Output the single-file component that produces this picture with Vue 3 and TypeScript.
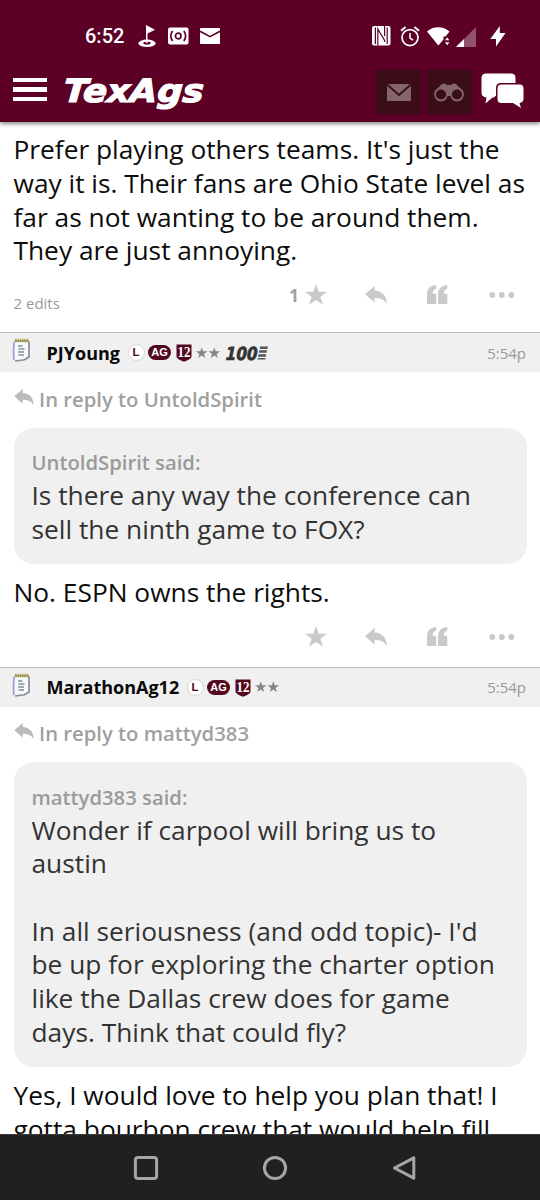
<script setup lang="ts">
interface Post {
  id: number
  author: string
  replyTo: string
  century: boolean
  time: string
  quote: string[]
  body: string[]
  actions: boolean
}

const intro: string[] = [
  "Prefer playing others teams. It's just the",
  'way it is. Their fans are Ohio State level as',
  'far as not wanting to be around them.',
  'They are just annoying.',
]

const posts: Post[] = [
  {
    id: 1,
    author: 'PJYoung',
    replyTo: 'UntoldSpirit',
    century: true,
    time: '5:54p',
    quote: ['Is there any way the conference can', 'sell the ninth game to FOX?'],
    body: ['No. ESPN owns the rights.'],
    actions: true,
  },
  {
    id: 2,
    author: 'MarathonAg12',
    replyTo: 'mattyd383',
    century: false,
    time: '5:54p',
    quote: [
      'Wonder if carpool will bring us to',
      'austin',
      '',
      "In all seriousness (and odd topic)- I'd",
      'be up for exploring the charter option',
      'like the Dallas crew does for game',
      'days. Think that could fly?',
    ],
    body: ['Yes, I would love to help you plan that! I', 'gotta bourbon crew that would help fill'],
    actions: false,
  },
]

const star = 'M11 0 L13.7 7.7 L22 7.8 L15.4 12.8 L17.8 20.6 L11 15.9 L4.2 20.6 L6.6 12.8 L0 7.8 L8.3 7.7 Z'
const reply = 'M0 8.2 L9.6 0 V4.6 C17 5 21.5 9.5 22 18 C19 13.5 15.5 12 9.6 12 V16.6 Z'
const quoteMark =
  'M9.2 0 V3.8 C6.8 4.3 5.7 6 5.7 8.7 H9.2 V19 H0 V9.5 C0 4 3.2 0.4 9.2 0 Z M20.3 0 V3.8 C17.9 4.3 16.8 6 16.8 8.7 H20.3 V19 H11.1 V9.5 C11.1 4 14.3 0.4 20.3 0 Z'
</script>

<template>
  <div class="screen">
    <header class="top">
      <div class="status">
        <span class="clock">6:52</span>
        <svg class="golf" width="18" height="23" viewBox="0 0 18 23">
          <ellipse cx="9" cy="18.3" rx="8.6" ry="3.7" fill="#fff" />
          <ellipse cx="9" cy="18" rx="3.7" ry="1.5" fill="#5c0025" />
          <path d="M8 0 L17 4.8 L9.5 8.5 V18 H8 Z" fill="#fff" />
        </svg>
        <svg class="cast" width="21" height="18" viewBox="0 0 21 18">
          <rect x="0" y="0.5" width="20.5" height="17" rx="2" fill="#fff" />
          <g fill="none" stroke="#5c0025" stroke-width="1.7">
            <circle cx="10.2" cy="9" r="2.8" />
            <path d="M4.6 4 C2.4 7 2.4 11 4.6 14 M15.8 4 C18 7 18 11 15.8 14" />
          </g>
        </svg>
        <svg class="mail" width="20" height="16" viewBox="0 0 20 16">
          <rect width="20" height="16" rx="0.8" fill="#fff" />
          <path d="M0 3.3 L10 8.6 L20 3.3" fill="none" stroke="#5c0025" stroke-width="1.6" />
        </svg>
        <span class="grow"></span>
        <svg class="nfc" width="19" height="20" viewBox="0 0 19 20">
          <rect width="18.5" height="19.5" rx="2" fill="#fff" />
          <path d="M3.4 1.5 V18 M5.8 19.5 V3 L12.6 14.5 V16 M15.2 18 V1.5 M12.6 0 V10" fill="none" stroke="#5c0025" stroke-width="1.2" />
        </svg>
        <svg class="alarm" width="20" height="21" viewBox="0 0 20 21">
          <g fill="none" stroke="#fff" stroke-width="1.7">
            <circle cx="10" cy="11.6" r="8" />
            <path d="M1 4.8 L5.6 1 M14.4 1 L19 4.8" stroke-width="2" />
            <path d="M10 7 V12 L13 14.2" stroke-width="1.5" />
          </g>
        </svg>
        <svg class="wifi" width="24" height="19" viewBox="0 0 24 19">
          <path d="M0 4.5 C6 -1.3 16.5 -1.3 22.5 4.5 L18.5 9.5 H16.5 V12.5 L11.3 18.5 Z" fill="#fff" />
          <path d="M18 13.3 L20.2 10.5 L22.4 13.3 Z M18 15.3 H22.4 L20.2 18.2 Z" fill="#fff" />
        </svg>
        <svg class="signal" width="21" height="20" viewBox="0 0 21 20">
          <path d="M20 0 V20 H0 Z" fill="#915270" />
          <path d="M8 12 V20 H0 Z" fill="#fff" />
        </svg>
        <svg class="bolt" width="16" height="21" viewBox="0 0 16 21">
          <path d="M9.8 0 V7 H15.5 L6 20.5 V13 H0.3 Z" fill="#fff" />
        </svg>
      </div>
      <div class="bar">
        <div class="burger"><i></i><i></i><i></i></div>
        <svg class="logo" width="150" height="40" viewBox="0 0 150 40">
          <g transform="translate(2 30.3) skewX(-4)">
            <text class="brand" textLength="140" lengthAdjust="spacingAndGlyphs">TexAgs</text>
          </g>
        </svg>
        <span class="grow"></span>
        <div class="tile">
          <svg width="24" height="17" viewBox="0 0 24 17">
            <rect width="24" height="17" fill="#84656d" />
            <path d="M0 0.5 L12 11 L24 0.5" fill="none" stroke="#3a0d17" stroke-width="2" />
          </svg>
        </div>
        <div class="tile second">
          <svg width="30" height="19" viewBox="0 0 30 19">
            <path d="M1 8 L8 1 Q11 -0.5 13 2 H17 Q19 -0.5 22 1 L29 8 L20 13 H10 Z" fill="#84656d" />
            <circle cx="7" cy="11.5" r="6" fill="#3a0d17" stroke="#84656d" stroke-width="1.8" />
            <circle cx="23" cy="11.5" r="6" fill="#3a0d17" stroke="#84656d" stroke-width="1.8" />
          </svg>
        </div>
        <svg class="chat" width="43" height="36" viewBox="0 0 43 36">
          <path d="M5 0.5 H30 Q34.5 0.5 34.5 5 V10 H20 Q15 10 15 15 V22.5 L13 24.5 H11.5 L4.5 30.5 L5.5 24.5 Q0.5 24 0.5 19.5 V5 Q0.5 0.5 5 0.5 Z" fill="#fff" />
          <path d="M20.5 11.5 H38.5 Q42.5 11.5 42.5 15.5 V25.5 Q42.5 29.5 38.5 30 L40 35 L32 30 H20.5 Q16.5 30 16.5 26 V15.5 Q16.5 11.5 20.5 11.5 Z" fill="#fff" />
        </svg>
      </div>
    </header>

    <main class="thread">
      <section class="first">
        <p class="copy"><span v-for="line in intro" :key="line" class="line">{{ line }}</span></p>
        <div class="actions">
          <span class="edits">2 edits</span>
          <span class="count">1</span>
          <svg class="a-star" width="22" height="21" viewBox="0 0 22 21"><path :d="star" /></svg>
          <svg class="a-reply" width="22" height="18" viewBox="0 0 22 18"><path :d="reply" /></svg>
          <svg class="a-quote" width="21" height="20" viewBox="0 0 21 20"><path :d="quoteMark" /></svg>
          <svg class="a-more" width="26" height="8" viewBox="0 0 26 8">
            <circle cx="3.3" cy="4" r="2.9" /><circle cx="12.8" cy="4" r="2.9" /><circle cx="22.3" cy="4" r="2.9" />
          </svg>
        </div>
      </section>

      <article v-for="post in posts" :key="post.id" class="post">
        <div class="head">
          <svg class="note" width="20" height="26" viewBox="0 0 20 26">
            <path d="M3.5 3.5 H16.5 V20 L12.5 22.5 L3 23.5 Q1.5 15 2.5 4 Z" fill="#f6fafb" />
            <path d="M2 5 Q1.2 14 1.8 23" fill="none" stroke="#9a9fd8" stroke-width="1.8" />
            <path d="M17 4.5 V20 L12.5 22.8 L3 24" fill="none" stroke="#8a8d8f" stroke-width="1.7" />
            <path d="M3 3.5 H17" stroke="#b9a45a" stroke-width="3.4" stroke-dasharray="1.6 0.7" />
            <path d="M2.5 4 H17" stroke="#8b7b46" stroke-width="1" />
            <path d="M6 9 H10.5 M6.5 12 H12.5 M6 15 H12 M6.5 18 H12" stroke="#7d939b" stroke-width="1.4" />
          </svg>
          <span class="author" :class="{ long: !post.century }">{{ post.author }}</span>
          <span class="ell">L</span>
          <span class="ag">AG</span>
          <svg class="shield" width="16" height="18" viewBox="0 0 16 18">
            <path d="M0.5 0.5 H15.5 V13 Q15 15.2 8 17.8 Q1 15.2 0.5 13 Z" fill="#54081f" />
            <text x="8" y="13" class="twelve" text-anchor="middle" textLength="13" lengthAdjust="spacingAndGlyphs">12</text>
          </svg>
          <svg class="stars" width="24" height="12" viewBox="0 0 46 22">
            <path :d="star" /><path :d="star" transform="translate(24)" />
          </svg>
          <svg v-if="post.century" class="century" width="45" height="20" viewBox="0 0 45 20">
            <g transform="translate(0.5 16.8) skewX(-2)">
              <text class="hundred" textLength="32" lengthAdjust="spacingAndGlyphs">100</text>
            </g>
            <path d="M35.2 3.5 H43 L42.4 6 H34.6 Z M34.4 7.3 H42.1 L41.5 9.8 H33.8 Z M33.6 11.2 H41.3 L40.7 13.7 H33 Z M32.9 14.9 H40.5 L40.2 16.6 H32.5 Z" fill="#555" />
          </svg>
          <span class="grow"></span>
          <span class="time">{{ post.time }}</span>
        </div>
        <div class="reply">
          <svg width="20" height="16" viewBox="0 0 22 18"><path :d="reply" /></svg>
          <span>In reply to {{ post.replyTo }}</span>
        </div>
        <blockquote class="quote">
          <div class="said">{{ post.replyTo }} said:</div>
          <span v-for="(line, i) in post.quote" :key="i" class="line">{{ line }}</span>
        </blockquote>
        <p class="copy"><span v-for="line in post.body" :key="line" class="line">{{ line }}</span></p>
        <div v-if="post.actions" class="actions tall">
          <svg class="a-star" width="22" height="21" viewBox="0 0 22 21"><path :d="star" /></svg>
          <svg class="a-reply" width="22" height="18" viewBox="0 0 22 18"><path :d="reply" /></svg>
          <svg class="a-quote" width="21" height="20" viewBox="0 0 21 20"><path :d="quoteMark" /></svg>
          <svg class="a-more" width="26" height="8" viewBox="0 0 26 8">
            <circle cx="3.3" cy="4" r="2.9" /><circle cx="12.8" cy="4" r="2.9" /><circle cx="22.3" cy="4" r="2.9" />
          </svg>
        </div>
      </article>
    </main>

    <nav class="nav">
      <svg width="26" height="26" viewBox="0 0 26 26"><rect x="2.4" y="2.4" width="21.2" height="21.2" rx="2.5" /></svg>
      <svg width="26" height="26" viewBox="0 0 26 26"><circle cx="13" cy="13" r="10.6" /></svg>
      <svg width="26" height="26" viewBox="0 0 26 26"><path d="M22.8 2.8 V23.2 L3.5 13 Z" stroke-linejoin="round" /></svg>
    </nav>
  </div>
</template>

<style>
body {
  margin: 0;
  background: #fff;
}
</style>

<style scoped>
.screen {
  display: flex;
  flex-direction: column;
  width: 540px;
  height: 1200px;
  overflow: hidden;
  background: #fff;
  color: #0c0c0c;
  font-family: "Open Sans", "Noto Sans", sans-serif;
}
svg {
  display: block;
  flex: none;
}
.grow {
  flex: 1;
}
.top {
  flex: none;
  height: 122px;
  background: #5c0025;
  box-shadow: 0 2px 4px rgba(0, 0, 0, 0.45);
  z-index: 1;
}
.status {
  display: flex;
  align-items: center;
  height: 72px;
  box-sizing: border-box;
  padding: 0 34.5px 0 85px;
}
.clock {
  width: 53px;
  font: 500 20px/24px Roboto, sans-serif;
  color: #fff;
}
.golf { margin-top: 1px; }
.cast { margin-left: 12px; }
.mail { margin-left: 11px; }
.alarm { margin-left: 9px; }
.wifi { margin-left: 7px; }
.signal { margin-left: 5px; margin-top: 1px; }
.bolt { margin-left: 13px; }
.bar {
  display: flex;
  align-items: center;
  height: 40px;
  padding: 0 16px 0 13px;
}
.burger {
  display: grid;
  gap: 5px;
  width: 34px;
  margin-top: -5px;
}
.burger i {
  height: 4.6px;
  background: #fff;
}
.logo {
  margin: 0 0 0 14px;
  overflow: visible;
}
.brand {
  font: italic 700 32px "DejaVu Sans", sans-serif;
  fill: #fff;
  stroke: #fff;
  stroke-width: 1.2px;
}
.tile {
  display: grid;
  place-items: center;
  width: 44px;
  height: 44px;
  border-radius: 3px;
  background: #3a0d17;
  box-shadow: 0 0 2px #3a0d17;
}
.second { margin-left: 6px; }
.chat { margin-left: 10.5px; margin-top: -2px; }
.tile:not(.second) { margin-right: -0.5px; }
.thread {
  flex: 1;
  min-height: 0;
  overflow: hidden;
}
.first {
  height: 210px;
  box-sizing: border-box;
  padding-top: 11.4px;
}
.copy {
  margin: 0 13.5px;
  font-size: 26.3px;
  line-height: 33.7px;
}
.line {
  display: block;
  height: 33.7px;
  white-space: nowrap;
}
.actions {
  display: flex;
  align-items: center;
  justify-content: flex-end;
  height: 53px;
  padding: 0 25px 0 13.5px;
  fill: #c9c9c9;
}
.actions.tall {
  height: 54.6px;
  padding-bottom: 2.6px;
}
.edits {
  margin: 17px auto 0 0;
  font-size: 15px;
  line-height: 20px;
  color: #999;
}
.count {
  margin-right: 6px;
  font-size: 17.5px;
  font-weight: 700;
  line-height: 20px;
  color: #a0a0a0;
}
.a-reply { margin-left: 38px; }
.a-quote { margin-left: 40px; }
.a-more { margin-left: 41px; }
.head {
  display: flex;
  align-items: center;
  height: 40px;
  box-sizing: border-box;
  padding: 0 14px 0 12px;
  border-top: 1.5px solid #b9b9b9;
  background: #f0f0f0;
}
.note { margin-top: -5px; }
.author {
  width: 73px;
  margin: 0 8px 0 14.5px;
  font-size: 18px;
  font-weight: 700;
  line-height: 24px;
  color: #0a0a0a;
  white-space: nowrap;
}
.author.long { width: 132px; }
.ell {
  width: 15px;
  height: 15px;
  border: 1px solid #d5d5d5;
  border-radius: 50%;
  background: #fff;
  font: 700 11.5px/15px "Liberation Sans", sans-serif;
  color: #54081f;
  text-align: center;
}
.ag {
  width: 23px;
  height: 15px;
  margin-left: 3.5px;
  border-radius: 8px;
  background: #54081f;
  font: 700 11px/15px "Liberation Sans", sans-serif;
  color: #fff;
  text-align: center;
}
.shield { margin-left: 5px; margin-top: 1px; }
.twelve {
  font: 700 15px "Liberation Serif", serif;
  fill: #fff;
}
.stars { margin-left: 4px; fill: #858585; }
.century { margin-left: 5px; }
.hundred {
  font: italic 700 18px "DejaVu Sans", sans-serif;
  fill: #333;
  stroke: #333;
  stroke-width: 0.7px;
}
.time {
  font-size: 15px;
  line-height: 20px;
  color: #999;
}
.reply {
  display: flex;
  align-items: center;
  height: 55.5px;
  padding-left: 13.5px;
  font-size: 20.25px;
  font-weight: 600;
  color: #a0a0a0;
}
.reply svg {
  margin: -6px 5.5px 0 0;
  fill: #bbb;
}
.reply span {
  margin-top: -2px;
}
.quote {
  margin: 0 13.5px 12.2px;
  padding: 21.5px 18px 17.3px;
  border-radius: 20px;
  background: #f0f0f0;
  font-size: 26.3px;
  line-height: 33.7px;
  color: #333;
}
.said {
  height: 30px;
  font-size: 20.25px;
  font-weight: 600;
  line-height: 27px;
  color: #9a9a9a;
}
.nav {
  display: flex;
  flex: none;
  align-items: center;
  justify-content: center;
  gap: 103px;
  height: 66px;
  box-sizing: border-box;
  padding-left: 10px;
  border-top: 1px solid #3a3a3a;
  background: #202020;
}
.nav svg {
  fill: none;
  stroke: #a6a6a6;
  stroke-width: 3;
}
</style>
